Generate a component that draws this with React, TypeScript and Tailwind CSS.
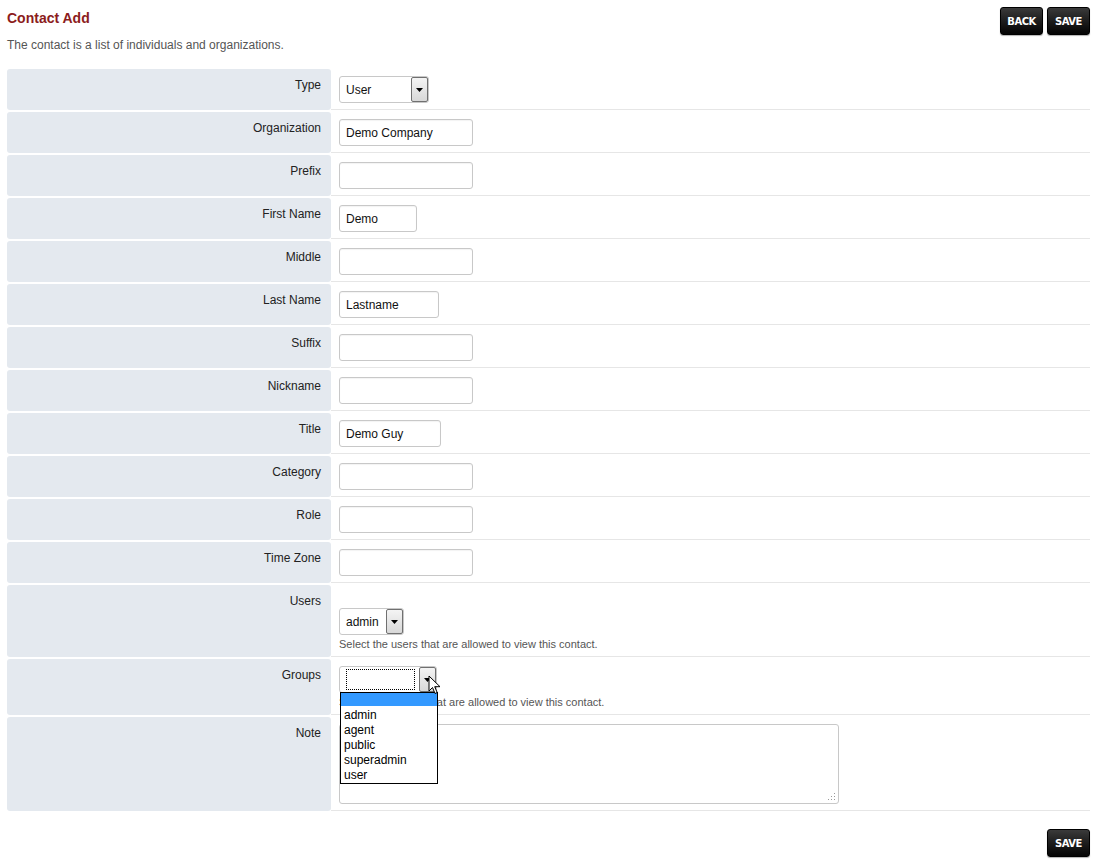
import React from "react";

const font = { fontFamily: '"Liberation Sans", Arial, sans-serif' };

function Btn({ label }: { label: string }) {
  return (
    <button className="w-[43px] h-[28px] rounded-[3px] bg-gradient-to-b from-[#3a3a3a] to-[#050505] border border-[#000] text-white text-[10px] font-bold shadow-[0_1px_1px_rgba(0,0,0,0.3)] flex items-center justify-center" style={{ fontFamily: '"DejaVu Sans", Verdana, sans-serif', letterSpacing: "-0.5px" }}>
      {label}
    </button>
  );
}

function Input({ value = "", w = 134 }: { value?: string; w?: number }) {
  return (
    <div
      className="h-[27px] border border-[#c8c8c8] rounded-[3px] bg-white flex items-center px-[6px] text-[12px] text-[#111] shadow-[inset_0_1px_1px_rgba(0,0,0,0.05)]"
      style={{ width: w }}
    >
      {value}
    </div>
  );
}

function Arrow() {
  return (
    <div className="w-[17px] h-[25px] border border-[#707070] rounded-[2px] bg-gradient-to-b from-[#f4f4f4] to-[#d8d8d8] flex items-center justify-center">
      <svg width="7" height="4" viewBox="0 0 7 4"><path d="M0 0h7L3.5 4z" fill="#000" /></svg>
    </div>
  );
}

function Select({ value, w, focus }: { value: string; w: number; focus?: boolean }) {
  return (
    <div className="h-[27px] border border-[#c8c8c8] rounded-[3px] bg-white flex items-center pl-[2px] pr-[0px] text-[12px] text-[#111]" style={{ width: w }}>
      <div className="flex-1 h-[21px] flex items-center px-[4px]">
        {focus ? <div className="w-full h-[21px] border border-dotted border-[#000]" /> : value}
      </div>
      <Arrow />
    </div>
  );
}

function Row({ label, h = 41, pt = 7, children }: { label: string; h?: number; pt?: number; children?: React.ReactNode }) {
  return (
    <div className="flex mb-[2px]" style={{ height: h }}>
      <div className="w-[324px] shrink-0 bg-[#e4e9ef] rounded-[3px] text-right pr-[10px] pt-[7px] text-[12px] text-[#222]">
        {label}
      </div>
      <div className="flex-1 border-b border-[#e6e6e6] pl-[8px]" style={{ paddingTop: pt }}>
        {children}
      </div>
    </div>
  );
}

export default function App() {
  const simple: [string, string, number][] = [
    ["Organization", "Demo Company", 134],
    ["Prefix", "", 134],
    ["First Name", "Demo", 78],
    ["Middle", "", 134],
    ["Last Name", "Lastname", 100],
    ["Suffix", "", 134],
    ["Nickname", "", 134],
    ["Title", "Demo Guy", 102],
    ["Category", "", 134],
    ["Role", "", 134],
    ["Time Zone", "", 134],
  ];
  return (
    <div className="w-[1102px] h-[866px] bg-white relative" style={font}>
      <div className="flex justify-between pl-[7px] pr-[12px] pt-[7px]">
        <div>
          <div className="text-[14px] font-bold text-[#8c1c1c] leading-[20px] pt-[1px]">Contact Add</div>
          <div className="text-[12px] text-[#555] mt-[10px] leading-[14px]">The contact is a list of individuals and organizations.</div>
        </div>
        <div className="flex gap-[4px]">
          <Btn label="BACK" />
          <Btn label="SAVE" />
        </div>
      </div>
      <div className="mt-[17px] ml-[7px] w-[1083px]">
        <Row label="Type">
          <Select value="User" w={90} />
        </Row>
        {simple.map(([l, v, w]) => (
          <Row key={l} label={l}>
            <Input value={v} w={w} />
          </Row>
        ))}
        <Row label="Users" h={72} pt={23}>
          <Select value="admin" w={65} />
          <div className="text-[11px] text-[#555] mt-[1px]">Select the users that are allowed to view this contact.</div>
        </Row>
        <Row label="Groups" h={56} pt={7}>
          <div className="relative">
            <Select value="" w={98} focus />
            <div className="text-[11px] text-[#555] mt-[1px]">Select the groups that are allowed to view this contact.</div>
            <div className="absolute left-[1px] top-[26px] w-[98px] border border-[#000] bg-white text-[12px] text-[#000] leading-[15px] z-10">
              <div className="h-[13px] bg-[#3399ff] mb-[1px]" />
              <div className="pl-[3px] mt-[2px]">admin</div>
              <div className="pl-[3px]">agent</div>
              <div className="pl-[3px]">public</div>
              <div className="pl-[3px]">superadmin</div>
              <div className="pl-[3px]">user</div>
            </div>
            <svg className="absolute left-[89px] top-[9px] z-20" width="13" height="20" viewBox="0 0 13 20">
              <path d="M1 1v15l3.5-3.5 2.5 6 2.2-1-2.5-5.8H12z" fill="#fff" stroke="#000" strokeWidth="1" strokeLinejoin="round" />
            </svg>
          </div>
        </Row>
        <Row label="Note" h={94} pt={7}>
          <div className="w-[500px] h-[80px] border border-[#c8c8c8] rounded-[3px] bg-white relative">
            <svg className="absolute right-[2px] bottom-[2px]" width="8" height="8" viewBox="0 0 8 8">
              <rect x="6" y="0" width="1" height="1" fill="#999" />
              <rect x="3" y="3" width="1" height="1" fill="#999" />
              <rect x="6" y="3" width="1" height="1" fill="#999" />
              <rect x="0" y="6" width="1" height="1" fill="#999" />
              <rect x="3" y="6" width="1" height="1" fill="#999" />
              <rect x="6" y="6" width="1" height="1" fill="#999" />
            </svg>
          </div>
        </Row>
      </div>
      <div className="flex justify-end pr-[12px] mt-[18px]">
        <Btn label="SAVE" />
      </div>
    </div>
  );
}
